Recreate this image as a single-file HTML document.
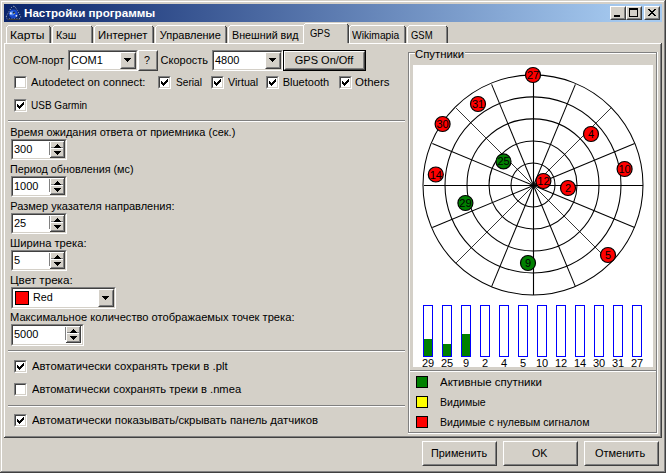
<!DOCTYPE html><html><head><meta charset="utf-8"><title>Настройки программы</title><style>
html,body{margin:0;padding:0}
body{width:666px;height:473px;position:relative;overflow:hidden;background:#d4d0c8;font:11px/13px "Liberation Sans",sans-serif;color:#000}
body>div,body>span,body>svg{position:absolute;display:block}
.t{white-space:nowrap}
.btn{box-sizing:border-box;background:#d4d0c8;border:1px solid;border-color:#fff #404040 #404040 #fff}
.btn i{display:block;box-sizing:border-box;width:100%;height:100%;border:1px solid;border-color:#d4d0c8 #808080 #808080 #d4d0c8}
.sunk{box-sizing:border-box;border:1px solid;border-color:#808080 #fff #fff #808080}
.sunk i{display:block;box-sizing:border-box;width:100%;height:100%;border:1px solid;border-color:#404040 #d4d0c8 #d4d0c8 #404040}
</style></head><body>
<div style="left:0px;top:0px;width:666px;height:473px;background:#d4d0c8;"></div>
<div style="left:0px;top:0px;width:666px;height:1px;background:#d4d0c8;"></div>
<div style="left:0px;top:0px;width:1px;height:473px;background:#d4d0c8;"></div>
<div style="left:1px;top:1px;width:664px;height:1px;background:#ffffff;"></div>
<div style="left:1px;top:1px;width:1px;height:471px;background:#ffffff;"></div>
<div style="left:0px;top:472px;width:666px;height:1px;background:#404040;"></div>
<div style="left:665px;top:0px;width:1px;height:473px;background:#404040;"></div>
<div style="left:1px;top:471px;width:664px;height:1px;background:#808080;"></div>
<div style="left:664px;top:1px;width:1px;height:471px;background:#808080;"></div>
<div style="left:4px;top:4px;width:658px;height:18px;background:linear-gradient(to right,#0a246a 0%,#a6caf0 95%);"></div>
<svg style="left:5px;top:5px" width="18" height="16" viewBox="5 5 18 16">
<path d="M13.5 6.3 C14.8 6.3 15.4 7.2 16.2 8.6 L20.2 15.4 C21.3 17.4 20.6 19 18.4 19 L8.6 19 C6.4 19 5.7 17.4 6.8 15.4 L10.8 8.6 C11.6 7.2 12.2 6.3 13.5 6.3 Z" fill="none" stroke="#b4b8c4" stroke-width="1" stroke-dasharray="1 1.5"/>
<path d="M8 19.5 H19.5" stroke="#3a3a3a" stroke-width="1"/>
<circle cx="13.4" cy="13.9" r="4.4" fill="#1a4ad0"/>
<circle cx="12.2" cy="13.2" r="2.3" fill="#4f86f0"/>
<circle cx="10.8" cy="13.4" r="1.1" fill="#dce8ff"/>
<circle cx="16.4" cy="15.8" r="0.9" fill="#e8f0ff"/>
<circle cx="13.8" cy="12.6" r="1.1" fill="#10204a"/>
<circle cx="14.2" cy="13.4" r="0.6" fill="#c8b040"/>
</svg>
<span class="t" style="left:24.16px;top:7px;color:#fff;font-weight:bold;transform:scaleX(1.0566);transform-origin:0 0">Настройки программы</span>
<div class="btn" style="left:610px;top:6px;width:16px;height:14px"><i></i></div>
<div style="left:614px;top:15px;width:6px;height:2px;background:#000;"></div>
<div class="btn" style="left:626px;top:6px;width:16px;height:14px"><i></i></div>
<div style="left:629px;top:8px;width:9px;height:9px;background:transparent;box-sizing:border-box;border:1px solid #000;border-top:2px solid #000"></div>
<div class="btn" style="left:644px;top:6px;width:16px;height:14px"><i></i></div>
<svg style="left:648px;top:9px" width="8" height="7" viewBox="0 0 8 7" shape-rendering="crispEdges"><path d="M0 0h2v1h-2zM6 0h2v1h-2zM1 1h2v1h-2zM5 1h2v1h-2zM2 2h4v1h-4zM3 3h2v1h-2zM2 4h4v1h-4zM1 5h2v1h-2zM5 5h2v1h-2zM0 6h2v1h-2zM6 6h2v1h-2z" fill="#000"/></svg>
<div style="left:4px;top:43px;width:657px;height:1px;background:#ffffff;"></div>
<div style="left:4px;top:43px;width:1px;height:394px;background:#ffffff;"></div>
<div style="left:4px;top:437px;width:658px;height:1px;background:#404040;"></div>
<div style="left:661px;top:43px;width:1px;height:395px;background:#404040;"></div>
<div style="left:5px;top:436px;width:656px;height:1px;background:#808080;"></div>
<div style="left:660px;top:44px;width:1px;height:393px;background:#808080;"></div>
<div style="left:6px;top:27px;width:1px;height:16px;background:#ffffff;"></div>
<div style="left:7px;top:26px;width:1px;height:1px;background:#ffffff;"></div>
<div style="left:8px;top:25px;width:41px;height:1px;background:#ffffff;"></div>
<div style="left:50px;top:27px;width:1px;height:16px;background:#404040;"></div>
<div style="left:49px;top:26px;width:1px;height:1px;background:#404040;"></div>
<div style="left:49px;top:27px;width:1px;height:16px;background:#808080;"></div>
<span class="t" style="left:10.43px;top:29px;;transform:scaleX(1.0970);transform-origin:0 0">Карты</span>
<div style="left:52px;top:27px;width:1px;height:16px;background:#ffffff;"></div>
<div style="left:53px;top:26px;width:1px;height:1px;background:#ffffff;"></div>
<div style="left:54px;top:25px;width:37px;height:1px;background:#ffffff;"></div>
<div style="left:92px;top:27px;width:1px;height:16px;background:#404040;"></div>
<div style="left:91px;top:26px;width:1px;height:1px;background:#404040;"></div>
<div style="left:91px;top:27px;width:1px;height:16px;background:#808080;"></div>
<span class="t" style="left:56.12px;top:29px;;transform:scaleX(0.9780);transform-origin:0 0">Кэш</span>
<div style="left:94px;top:27px;width:1px;height:16px;background:#ffffff;"></div>
<div style="left:95px;top:26px;width:1px;height:1px;background:#ffffff;"></div>
<div style="left:96px;top:25px;width:56px;height:1px;background:#ffffff;"></div>
<div style="left:153px;top:27px;width:1px;height:16px;background:#404040;"></div>
<div style="left:152px;top:26px;width:1px;height:1px;background:#404040;"></div>
<div style="left:152px;top:27px;width:1px;height:16px;background:#808080;"></div>
<span class="t" style="left:97.88px;top:29px;;transform:scaleX(1.0292);transform-origin:0 0">Интернет</span>
<div style="left:155px;top:27px;width:1px;height:16px;background:#ffffff;"></div>
<div style="left:156px;top:26px;width:1px;height:1px;background:#ffffff;"></div>
<div style="left:157px;top:25px;width:68px;height:1px;background:#ffffff;"></div>
<div style="left:226px;top:27px;width:1px;height:16px;background:#404040;"></div>
<div style="left:225px;top:26px;width:1px;height:1px;background:#404040;"></div>
<div style="left:225px;top:27px;width:1px;height:16px;background:#808080;"></div>
<span class="t" style="left:159.71px;top:29px;">Управление</span>
<div style="left:228px;top:27px;width:1px;height:16px;background:#ffffff;"></div>
<div style="left:229px;top:26px;width:1px;height:1px;background:#ffffff;"></div>
<div style="left:230px;top:25px;width:73px;height:1px;background:#ffffff;"></div>
<div style="left:304px;top:27px;width:1px;height:16px;background:#404040;"></div>
<div style="left:303px;top:26px;width:1px;height:1px;background:#404040;"></div>
<div style="left:303px;top:27px;width:1px;height:16px;background:#808080;"></div>
<span class="t" style="left:231.72px;top:29px;;transform:scaleX(0.9767);transform-origin:0 0">Внешний вид</span>
<div style="left:349px;top:27px;width:1px;height:16px;background:#ffffff;"></div>
<div style="left:350px;top:26px;width:1px;height:1px;background:#ffffff;"></div>
<div style="left:351px;top:25px;width:53px;height:1px;background:#ffffff;"></div>
<div style="left:405px;top:27px;width:1px;height:16px;background:#404040;"></div>
<div style="left:404px;top:26px;width:1px;height:1px;background:#404040;"></div>
<div style="left:404px;top:27px;width:1px;height:16px;background:#808080;"></div>
<span class="t" style="left:352.25px;top:29px;;transform:scaleX(0.9323);transform-origin:0 0">Wikimapia</span>
<div style="left:407px;top:27px;width:1px;height:16px;background:#ffffff;"></div>
<div style="left:408px;top:26px;width:1px;height:1px;background:#ffffff;"></div>
<div style="left:409px;top:25px;width:37px;height:1px;background:#ffffff;"></div>
<div style="left:447px;top:27px;width:1px;height:16px;background:#404040;"></div>
<div style="left:446px;top:26px;width:1px;height:1px;background:#404040;"></div>
<div style="left:446px;top:27px;width:1px;height:16px;background:#808080;"></div>
<span class="t" style="left:411.2px;top:29px;;transform:scaleX(0.8618);transform-origin:0 0">GSM</span>
<div style="left:303px;top:23px;width:46px;height:21px;background:#d4d0c8;"></div>
<div style="left:303px;top:25px;width:1px;height:19px;background:#ffffff;"></div>
<div style="left:304px;top:24px;width:1px;height:1px;background:#ffffff;"></div>
<div style="left:305px;top:23px;width:42px;height:1px;background:#ffffff;"></div>
<div style="left:348px;top:25px;width:1px;height:18px;background:#404040;"></div>
<div style="left:347px;top:24px;width:1px;height:1px;background:#404040;"></div>
<div style="left:347px;top:25px;width:1px;height:18px;background:#808080;"></div>
<span class="t" style="left:310.0px;top:27px;;transform:scaleX(0.8608);transform-origin:0 0">GPS</span>
<span class="t" style="left:13.22px;top:54px;;transform:scaleX(0.9784);transform-origin:0 0">COM-порт</span>
<div class="sunk" style="left:68px;top:50px;width:70px;height:21px"><i style="background:#fff"></i></div>
<div class="btn" style="left:120px;top:52px;width:16px;height:17px"><i></i></div>
<svg style="left:124px;top:58px" width="7" height="4" viewBox="0 0 7 4" shape-rendering="crispEdges"><path d="M0 0h7v1h-7zM1 1h5v1h-5zM2 2h3v1h-3zM3 3h1v1h-1z" fill="#000"/></svg>
<span class="t" style="left:71px;top:54px;">COM1</span>
<div class="btn" style="left:138px;top:50px;width:20px;height:21px"><i></i></div>
<span class="t" style="left:144.11px;top:54px;;transform:scaleX(0.9796);transform-origin:0 0">?</span>
<span class="t" style="left:160.6px;top:54px;">Скорость</span>
<div class="sunk" style="left:212px;top:50px;width:71px;height:21px"><i style="background:#fff"></i></div>
<div class="btn" style="left:265px;top:52px;width:16px;height:17px"><i></i></div>
<svg style="left:269px;top:58px" width="7" height="4" viewBox="0 0 7 4" shape-rendering="crispEdges"><path d="M0 0h7v1h-7zM1 1h5v1h-5zM2 2h3v1h-3zM3 3h1v1h-1z" fill="#000"/></svg>
<span class="t" style="left:215px;top:54px;">4800</span>
<div style="left:283px;top:50px;width:83px;height:21px;background:#000;"></div>
<div class="btn" style="left:284px;top:51px;width:81px;height:19px"><i></i></div>
<span class="t" style="left:294.81px;top:54px;">GPS On/Off</span>
<div class="sunk" style="left:14px;top:76px;width:13px;height:13px"><i style="background:#fff"></i></div>
<span class="t" style="left:31.09px;top:76px;;transform:scaleX(1.0166);transform-origin:0 0">Autodetect on connect:</span>
<div class="sunk" style="left:158px;top:76px;width:13px;height:13px"><i style="background:#fff"></i></div>
<svg style="left:161px;top:79px" width="7" height="7" viewBox="0 0 7 7" shape-rendering="crispEdges"><path d="M0 2h1v3h-1zM1 3h1v3h-1zM2 4h1v3h-1zM3 3h1v3h-1zM4 2h1v3h-1zM5 1h1v3h-1zM6 0h1v3h-1z" fill="#000"/></svg>
<span class="t" style="left:175.66px;top:76px;;transform:scaleX(0.9209);transform-origin:0 0">Serial</span>
<div class="sunk" style="left:211px;top:76px;width:13px;height:13px"><i style="background:#fff"></i></div>
<svg style="left:214px;top:79px" width="7" height="7" viewBox="0 0 7 7" shape-rendering="crispEdges"><path d="M0 2h1v3h-1zM1 3h1v3h-1zM2 4h1v3h-1zM3 3h1v3h-1zM4 2h1v3h-1zM5 1h1v3h-1zM6 0h1v3h-1z" fill="#000"/></svg>
<span class="t" style="left:228.32px;top:76px;;transform:scaleX(0.9747);transform-origin:0 0">Virtual</span>
<div class="sunk" style="left:266px;top:76px;width:13px;height:13px"><i style="background:#fff"></i></div>
<svg style="left:269px;top:79px" width="7" height="7" viewBox="0 0 7 7" shape-rendering="crispEdges"><path d="M0 2h1v3h-1zM1 3h1v3h-1zM2 4h1v3h-1zM3 3h1v3h-1zM4 2h1v3h-1zM5 1h1v3h-1zM6 0h1v3h-1z" fill="#000"/></svg>
<span class="t" style="left:282.7px;top:76px;">Bluetooth</span>
<div class="sunk" style="left:339px;top:76px;width:13px;height:13px"><i style="background:#fff"></i></div>
<svg style="left:342px;top:79px" width="7" height="7" viewBox="0 0 7 7" shape-rendering="crispEdges"><path d="M0 2h1v3h-1zM1 3h1v3h-1zM2 4h1v3h-1zM3 3h1v3h-1zM4 2h1v3h-1zM5 1h1v3h-1zM6 0h1v3h-1z" fill="#000"/></svg>
<span class="t" style="left:355.27px;top:76px;;transform:scaleX(1.0450);transform-origin:0 0">Others</span>
<div class="sunk" style="left:14px;top:99px;width:13px;height:13px"><i style="background:#fff"></i></div>
<svg style="left:17px;top:102px" width="7" height="7" viewBox="0 0 7 7" shape-rendering="crispEdges"><path d="M0 2h1v3h-1zM1 3h1v3h-1zM2 4h1v3h-1zM3 3h1v3h-1zM4 2h1v3h-1zM5 1h1v3h-1zM6 0h1v3h-1z" fill="#000"/></svg>
<span class="t" style="left:30.56px;top:99px;;transform:scaleX(0.9101);transform-origin:0 0">USB Garmin</span>
<div style="left:8px;top:120px;width:397px;height:1px;background:#808080;"></div>
<div style="left:8px;top:121px;width:397px;height:1px;background:#ffffff;"></div>
<span class="t" style="left:10.29px;top:126px;">Время ожидания ответа от приемника (сек.)</span>
<span class="t" style="left:10.31px;top:163px;;transform:scaleX(0.9802);transform-origin:0 0">Период обновления (мс)</span>
<span class="t" style="left:10.3px;top:200px;">Размер указателя направления:</span>
<span class="t" style="left:10.29px;top:237px;;transform:scaleX(1.0166);transform-origin:0 0">Ширина трека:</span>
<span class="t" style="left:10.26px;top:274px;;transform:scaleX(1.0588);transform-origin:0 0">Цвет трека:</span>
<span class="t" style="left:10.29px;top:311px;;transform:scaleX(1.0127);transform-origin:0 0">Максимальное количество отображаемых точек трека:</span>
<div class="sunk" style="left:11px;top:139px;width:56px;height:21px"><i style="background:#fff"></i></div>
<div style="left:49px;top:142px;width:1px;height:13px;background:#808080;"></div>
<div style="left:50px;top:141px;width:15px;height:17px;background:#d4d0c8;"></div>
<div style="left:50px;top:141px;width:1px;height:17px;background:#ffffff;"></div>
<div style="left:50px;top:141px;width:14px;height:1px;background:#ffffff;"></div>
<div style="left:51px;top:147px;width:13px;height:1px;background:#808080;"></div>
<div style="left:50px;top:148px;width:14px;height:1px;background:#ffffff;"></div>
<div style="left:63px;top:142px;width:1px;height:15px;background:#808080;"></div>
<div style="left:51px;top:156px;width:13px;height:1px;background:#808080;"></div>
<div style="left:64px;top:141px;width:1px;height:17px;background:#404040;"></div>
<div style="left:50px;top:157px;width:15px;height:1px;background:#404040;"></div>
<svg style="left:54px;top:144px" width="7" height="4" viewBox="0 0 7 4" shape-rendering="crispEdges"><path d="M3 0h1v1h-1zM2 1h3v1h-3zM1 2h5v1h-5zM0 3h7v1h-7z" fill="#000"/></svg>
<svg style="left:54px;top:151px" width="7" height="4" viewBox="0 0 7 4" shape-rendering="crispEdges"><path d="M0 0h7v1h-7zM1 1h5v1h-5zM2 2h3v1h-3zM3 3h1v1h-1z" fill="#000"/></svg>
<span class="t" style="left:14px;top:143px;">300</span>
<div class="sunk" style="left:11px;top:176px;width:56px;height:21px"><i style="background:#fff"></i></div>
<div style="left:49px;top:179px;width:1px;height:13px;background:#808080;"></div>
<div style="left:50px;top:178px;width:15px;height:17px;background:#d4d0c8;"></div>
<div style="left:50px;top:178px;width:1px;height:17px;background:#ffffff;"></div>
<div style="left:50px;top:178px;width:14px;height:1px;background:#ffffff;"></div>
<div style="left:51px;top:184px;width:13px;height:1px;background:#808080;"></div>
<div style="left:50px;top:185px;width:14px;height:1px;background:#ffffff;"></div>
<div style="left:63px;top:179px;width:1px;height:15px;background:#808080;"></div>
<div style="left:51px;top:193px;width:13px;height:1px;background:#808080;"></div>
<div style="left:64px;top:178px;width:1px;height:17px;background:#404040;"></div>
<div style="left:50px;top:194px;width:15px;height:1px;background:#404040;"></div>
<svg style="left:54px;top:181px" width="7" height="4" viewBox="0 0 7 4" shape-rendering="crispEdges"><path d="M3 0h1v1h-1zM2 1h3v1h-3zM1 2h5v1h-5zM0 3h7v1h-7z" fill="#000"/></svg>
<svg style="left:54px;top:188px" width="7" height="4" viewBox="0 0 7 4" shape-rendering="crispEdges"><path d="M0 0h7v1h-7zM1 1h5v1h-5zM2 2h3v1h-3zM3 3h1v1h-1z" fill="#000"/></svg>
<span class="t" style="left:14px;top:180px;">1000</span>
<div class="sunk" style="left:11px;top:213px;width:56px;height:21px"><i style="background:#fff"></i></div>
<div style="left:49px;top:216px;width:1px;height:13px;background:#808080;"></div>
<div style="left:50px;top:215px;width:15px;height:17px;background:#d4d0c8;"></div>
<div style="left:50px;top:215px;width:1px;height:17px;background:#ffffff;"></div>
<div style="left:50px;top:215px;width:14px;height:1px;background:#ffffff;"></div>
<div style="left:51px;top:221px;width:13px;height:1px;background:#808080;"></div>
<div style="left:50px;top:222px;width:14px;height:1px;background:#ffffff;"></div>
<div style="left:63px;top:216px;width:1px;height:15px;background:#808080;"></div>
<div style="left:51px;top:230px;width:13px;height:1px;background:#808080;"></div>
<div style="left:64px;top:215px;width:1px;height:17px;background:#404040;"></div>
<div style="left:50px;top:231px;width:15px;height:1px;background:#404040;"></div>
<svg style="left:54px;top:218px" width="7" height="4" viewBox="0 0 7 4" shape-rendering="crispEdges"><path d="M3 0h1v1h-1zM2 1h3v1h-3zM1 2h5v1h-5zM0 3h7v1h-7z" fill="#000"/></svg>
<svg style="left:54px;top:225px" width="7" height="4" viewBox="0 0 7 4" shape-rendering="crispEdges"><path d="M0 0h7v1h-7zM1 1h5v1h-5zM2 2h3v1h-3zM3 3h1v1h-1z" fill="#000"/></svg>
<span class="t" style="left:14px;top:217px;">25</span>
<div class="sunk" style="left:11px;top:250px;width:56px;height:21px"><i style="background:#fff"></i></div>
<div style="left:49px;top:253px;width:1px;height:13px;background:#808080;"></div>
<div style="left:50px;top:252px;width:15px;height:17px;background:#d4d0c8;"></div>
<div style="left:50px;top:252px;width:1px;height:17px;background:#ffffff;"></div>
<div style="left:50px;top:252px;width:14px;height:1px;background:#ffffff;"></div>
<div style="left:51px;top:258px;width:13px;height:1px;background:#808080;"></div>
<div style="left:50px;top:259px;width:14px;height:1px;background:#ffffff;"></div>
<div style="left:63px;top:253px;width:1px;height:15px;background:#808080;"></div>
<div style="left:51px;top:267px;width:13px;height:1px;background:#808080;"></div>
<div style="left:64px;top:252px;width:1px;height:17px;background:#404040;"></div>
<div style="left:50px;top:268px;width:15px;height:1px;background:#404040;"></div>
<svg style="left:54px;top:255px" width="7" height="4" viewBox="0 0 7 4" shape-rendering="crispEdges"><path d="M3 0h1v1h-1zM2 1h3v1h-3zM1 2h5v1h-5zM0 3h7v1h-7z" fill="#000"/></svg>
<svg style="left:54px;top:262px" width="7" height="4" viewBox="0 0 7 4" shape-rendering="crispEdges"><path d="M0 0h7v1h-7zM1 1h5v1h-5zM2 2h3v1h-3zM3 3h1v1h-1z" fill="#000"/></svg>
<span class="t" style="left:14px;top:254px;">5</span>
<div class="sunk" style="left:11px;top:287px;width:105px;height:22px"><i style="background:#fff"></i></div>
<div class="btn" style="left:98px;top:289px;width:16px;height:18px"><i></i></div>
<svg style="left:102px;top:296px" width="7" height="4" viewBox="0 0 7 4" shape-rendering="crispEdges"><path d="M0 0h7v1h-7zM1 1h5v1h-5zM2 2h3v1h-3zM3 3h1v1h-1z" fill="#000"/></svg>
<div style="left:15px;top:291px;width:14px;height:14px;background:#ff0000;box-sizing:border-box;border:1px solid #000"></div>
<span class="t" style="left:33.11px;top:291px;;transform:scaleX(0.9808);transform-origin:0 0">Red</span>
<div class="sunk" style="left:11px;top:324px;width:73px;height:22px"><i style="background:#fff"></i></div>
<div style="left:65px;top:327px;width:1px;height:13px;background:#808080;"></div>
<div style="left:66px;top:326px;width:15px;height:17px;background:#d4d0c8;"></div>
<div style="left:66px;top:326px;width:1px;height:17px;background:#ffffff;"></div>
<div style="left:66px;top:326px;width:14px;height:1px;background:#ffffff;"></div>
<div style="left:67px;top:332px;width:13px;height:1px;background:#808080;"></div>
<div style="left:66px;top:333px;width:14px;height:1px;background:#ffffff;"></div>
<div style="left:79px;top:327px;width:1px;height:15px;background:#808080;"></div>
<div style="left:67px;top:341px;width:13px;height:1px;background:#808080;"></div>
<div style="left:80px;top:326px;width:1px;height:17px;background:#404040;"></div>
<div style="left:66px;top:342px;width:15px;height:1px;background:#404040;"></div>
<svg style="left:70px;top:329px" width="7" height="4" viewBox="0 0 7 4" shape-rendering="crispEdges"><path d="M3 0h1v1h-1zM2 1h3v1h-3zM1 2h5v1h-5zM0 3h7v1h-7z" fill="#000"/></svg>
<svg style="left:70px;top:336px" width="7" height="4" viewBox="0 0 7 4" shape-rendering="crispEdges"><path d="M0 0h7v1h-7zM1 1h5v1h-5zM2 2h3v1h-3zM3 3h1v1h-1z" fill="#000"/></svg>
<span class="t" style="left:14px;top:328px;">5000</span>
<div style="left:8px;top:350px;width:397px;height:1px;background:#808080;"></div>
<div style="left:8px;top:351px;width:397px;height:1px;background:#ffffff;"></div>
<div class="sunk" style="left:14px;top:360px;width:13px;height:13px"><i style="background:#fff"></i></div>
<svg style="left:17px;top:363px" width="7" height="7" viewBox="0 0 7 7" shape-rendering="crispEdges"><path d="M0 2h1v3h-1zM1 3h1v3h-1zM2 4h1v3h-1zM3 3h1v3h-1zM4 2h1v3h-1zM5 1h1v3h-1zM6 0h1v3h-1z" fill="#000"/></svg>
<span class="t" style="left:31.88px;top:360px;;transform:scaleX(1.0293);transform-origin:0 0">Автоматически сохранять треки в .plt</span>
<div class="sunk" style="left:14px;top:383px;width:13px;height:13px"><i style="background:#fff"></i></div>
<span class="t" style="left:31.89px;top:383px;;transform:scaleX(1.0154);transform-origin:0 0">Автоматически сохранять треки в .nmea</span>
<div style="left:8px;top:405px;width:397px;height:1px;background:#808080;"></div>
<div style="left:8px;top:406px;width:397px;height:1px;background:#ffffff;"></div>
<div class="sunk" style="left:14px;top:414px;width:13px;height:13px"><i style="background:#fff"></i></div>
<svg style="left:17px;top:417px" width="7" height="7" viewBox="0 0 7 7" shape-rendering="crispEdges"><path d="M0 2h1v3h-1zM1 3h1v3h-1zM2 4h1v3h-1zM3 3h1v3h-1zM4 2h1v3h-1zM5 1h1v3h-1zM6 0h1v3h-1z" fill="#000"/></svg>
<span class="t" style="left:31.88px;top:414px;;transform:scaleX(1.0350);transform-origin:0 0">Автоматически показывать/скрывать панель датчиков</span>
<div style="left:408px;top:52px;width:249px;height:1px;background:#808080;"></div>
<div style="left:408px;top:52px;width:1px;height:381px;background:#808080;"></div>
<div style="left:409px;top:53px;width:247px;height:1px;background:#ffffff;"></div>
<div style="left:409px;top:53px;width:1px;height:379px;background:#ffffff;"></div>
<div style="left:408px;top:433px;width:250px;height:1px;background:#ffffff;"></div>
<div style="left:657px;top:52px;width:1px;height:382px;background:#ffffff;"></div>
<div style="left:408px;top:432px;width:249px;height:1px;background:#808080;"></div>
<div style="left:656px;top:52px;width:1px;height:381px;background:#808080;"></div>
<div style="left:415px;top:50px;width:50px;height:8px;background:#d4d0c8;"></div>
<span class="t" style="left:415.28px;top:48px;;transform:scaleX(1.0331);transform-origin:0 0">Спутники</span>
<div style="left:413px;top:65px;width:240px;height:302px;background:#fff;"></div>
<div style="left:410px;top:370px;width:246px;height:1px;background:#808080;"></div>
<div style="left:410px;top:371px;width:246px;height:1px;background:#ffffff;"></div>
<svg style="left:413px;top:65px" width="241" height="303" viewBox="413 65 241 303"><g fill="none" stroke="#000" stroke-width="1.05"><circle cx="533" cy="184.9" r="22"/><circle cx="533" cy="184.9" r="44"/><circle cx="533" cy="184.9" r="66"/><circle cx="533" cy="184.9" r="88"/><circle cx="533" cy="184.9" r="110"/><line stroke-width="1.12" x1="533.5" y1="185.5" x2="533.50" y2="76.00"/><line stroke-width="1.03" x1="533.5" y1="185.5" x2="575.40" y2="84.34"/><line stroke-width="0.79" x1="533.5" y1="185.5" x2="610.93" y2="108.07"/><line stroke-width="1.03" x1="533.5" y1="185.5" x2="634.66" y2="143.60"/><line stroke-width="1.12" x1="533.5" y1="185.5" x2="643.00" y2="185.50"/><line stroke-width="1.03" x1="533.5" y1="185.5" x2="634.66" y2="227.40"/><line stroke-width="0.79" x1="533.5" y1="185.5" x2="610.93" y2="262.93"/><line stroke-width="1.03" x1="533.5" y1="185.5" x2="575.40" y2="286.66"/><line stroke-width="1.12" x1="533.5" y1="185.5" x2="533.50" y2="295.00"/><line stroke-width="1.03" x1="533.5" y1="185.5" x2="491.60" y2="286.66"/><line stroke-width="0.79" x1="533.5" y1="185.5" x2="456.07" y2="262.93"/><line stroke-width="1.03" x1="533.5" y1="185.5" x2="432.34" y2="227.40"/><line stroke-width="1.12" x1="533.5" y1="185.5" x2="424.00" y2="185.50"/><line stroke-width="1.03" x1="533.5" y1="185.5" x2="432.34" y2="143.60"/><line stroke-width="0.79" x1="533.5" y1="185.5" x2="456.07" y2="108.07"/><line stroke-width="1.03" x1="533.5" y1="185.5" x2="491.60" y2="84.34"/></g><circle cx="533" cy="75" r="7.5" fill="#ff0000" stroke="#000" stroke-width="1.2"/><text x="533" y="79" text-anchor="middle" font-size="11" font-family="Liberation Sans, sans-serif" fill="#000">27</text><circle cx="478" cy="104" r="7.5" fill="#ff0000" stroke="#000" stroke-width="1.2"/><text x="478" y="108" text-anchor="middle" font-size="11" font-family="Liberation Sans, sans-serif" fill="#000">31</text><circle cx="442.6" cy="124" r="7.5" fill="#ff0000" stroke="#000" stroke-width="1.2"/><text x="442.6" y="128" text-anchor="middle" font-size="11" font-family="Liberation Sans, sans-serif" fill="#000">30</text><circle cx="591" cy="134" r="7.5" fill="#ff0000" stroke="#000" stroke-width="1.2"/><text x="591" y="138" text-anchor="middle" font-size="11" font-family="Liberation Sans, sans-serif" fill="#000">4</text><circle cx="624.6" cy="169" r="7.5" fill="#ff0000" stroke="#000" stroke-width="1.2"/><text x="624.6" y="173" text-anchor="middle" font-size="11" font-family="Liberation Sans, sans-serif" fill="#000">10</text><circle cx="435.8" cy="174.5" r="7.5" fill="#ff0000" stroke="#000" stroke-width="1.2"/><text x="435.8" y="178.5" text-anchor="middle" font-size="11" font-family="Liberation Sans, sans-serif" fill="#000">14</text><circle cx="568" cy="188" r="7.5" fill="#ff0000" stroke="#000" stroke-width="1.2"/><text x="568" y="192" text-anchor="middle" font-size="11" font-family="Liberation Sans, sans-serif" fill="#000">2</text><circle cx="543.4" cy="181" r="7.5" fill="#ff0000" stroke="#000" stroke-width="1.2"/><text x="543.4" y="185" text-anchor="middle" font-size="11" font-family="Liberation Sans, sans-serif" fill="#000">12</text><circle cx="503.5" cy="161.4" r="7.5" fill="#008000" stroke="#000" stroke-width="1.2"/><text x="503.5" y="165.4" text-anchor="middle" font-size="11" font-family="Liberation Sans, sans-serif" fill="#000">25</text><circle cx="465.4" cy="203" r="7.5" fill="#008000" stroke="#000" stroke-width="1.2"/><text x="465.4" y="207" text-anchor="middle" font-size="11" font-family="Liberation Sans, sans-serif" fill="#000">29</text><circle cx="608" cy="255" r="7.5" fill="#ff0000" stroke="#000" stroke-width="1.2"/><text x="608" y="259" text-anchor="middle" font-size="11" font-family="Liberation Sans, sans-serif" fill="#000">5</text><circle cx="528" cy="263" r="7.5" fill="#008000" stroke="#000" stroke-width="1.2"/><text x="528" y="267" text-anchor="middle" font-size="11" font-family="Liberation Sans, sans-serif" fill="#000">9</text><rect x="423.5" y="305.5" width="9" height="51" fill="#fff" stroke="#0000ff" stroke-width="1"/><rect x="424" y="339" width="8" height="17" fill="#008000"/><text x="428" y="367" text-anchor="middle" font-size="11" font-family="Liberation Sans, sans-serif" fill="#000">29</text><rect x="442.5" y="305.5" width="9" height="51" fill="#fff" stroke="#0000ff" stroke-width="1"/><rect x="443" y="344" width="8" height="12" fill="#008000"/><text x="447" y="367" text-anchor="middle" font-size="11" font-family="Liberation Sans, sans-serif" fill="#000">25</text><rect x="461.5" y="305.5" width="9" height="51" fill="#fff" stroke="#0000ff" stroke-width="1"/><rect x="462" y="334" width="8" height="22" fill="#008000"/><text x="466" y="367" text-anchor="middle" font-size="11" font-family="Liberation Sans, sans-serif" fill="#000">9</text><rect x="480.5" y="305.5" width="9" height="51" fill="#fff" stroke="#0000ff" stroke-width="1"/><text x="485" y="367" text-anchor="middle" font-size="11" font-family="Liberation Sans, sans-serif" fill="#000">2</text><rect x="499.5" y="305.5" width="9" height="51" fill="#fff" stroke="#0000ff" stroke-width="1"/><text x="504" y="367" text-anchor="middle" font-size="11" font-family="Liberation Sans, sans-serif" fill="#000">4</text><rect x="518.5" y="305.5" width="9" height="51" fill="#fff" stroke="#0000ff" stroke-width="1"/><text x="523" y="367" text-anchor="middle" font-size="11" font-family="Liberation Sans, sans-serif" fill="#000">5</text><rect x="537.5" y="305.5" width="9" height="51" fill="#fff" stroke="#0000ff" stroke-width="1"/><text x="542" y="367" text-anchor="middle" font-size="11" font-family="Liberation Sans, sans-serif" fill="#000">10</text><rect x="556.5" y="305.5" width="9" height="51" fill="#fff" stroke="#0000ff" stroke-width="1"/><text x="561" y="367" text-anchor="middle" font-size="11" font-family="Liberation Sans, sans-serif" fill="#000">12</text><rect x="575.5" y="305.5" width="9" height="51" fill="#fff" stroke="#0000ff" stroke-width="1"/><text x="580" y="367" text-anchor="middle" font-size="11" font-family="Liberation Sans, sans-serif" fill="#000">14</text><rect x="594.5" y="305.5" width="9" height="51" fill="#fff" stroke="#0000ff" stroke-width="1"/><text x="599" y="367" text-anchor="middle" font-size="11" font-family="Liberation Sans, sans-serif" fill="#000">30</text><rect x="613.5" y="305.5" width="9" height="51" fill="#fff" stroke="#0000ff" stroke-width="1"/><text x="618" y="367" text-anchor="middle" font-size="11" font-family="Liberation Sans, sans-serif" fill="#000">31</text><rect x="632.5" y="305.5" width="9" height="51" fill="#fff" stroke="#0000ff" stroke-width="1"/><text x="637" y="367" text-anchor="middle" font-size="11" font-family="Liberation Sans, sans-serif" fill="#000">27</text></svg>
<div style="left:416px;top:376px;width:12px;height:12px;background:#008000;box-sizing:border-box;border:1px solid #000"></div>
<span class="t" style="left:440.07px;top:376px;;transform:scaleX(1.0428);transform-origin:0 0">Активные спутники</span>
<div style="left:416px;top:396px;width:12px;height:12px;background:#ffff00;box-sizing:border-box;border:1px solid #000"></div>
<span class="t" style="left:440.13px;top:396px;;transform:scaleX(0.9593);transform-origin:0 0">Видимые</span>
<div style="left:416px;top:416px;width:12px;height:12px;background:#ff0000;box-sizing:border-box;border:1px solid #000"></div>
<span class="t" style="left:440.13px;top:416px;;transform:scaleX(0.9604);transform-origin:0 0">Видимые с нулевым сигналом</span>
<div class="btn" style="left:422px;top:441px;width:75px;height:25px"><i></i></div>
<span class="t" style="left:430.51px;top:447px;;transform:scaleX(0.9869);transform-origin:0 0">Применить</span>
<div class="btn" style="left:503px;top:441px;width:75px;height:25px"><i></i></div>
<span class="t" style="left:532.32px;top:447px;;transform:scaleX(0.9682);transform-origin:0 0">OK</span>
<div class="btn" style="left:584px;top:441px;width:75px;height:25px"><i></i></div>
<span class="t" style="left:594.89px;top:447px;">Отменить</span>
</body></html>
